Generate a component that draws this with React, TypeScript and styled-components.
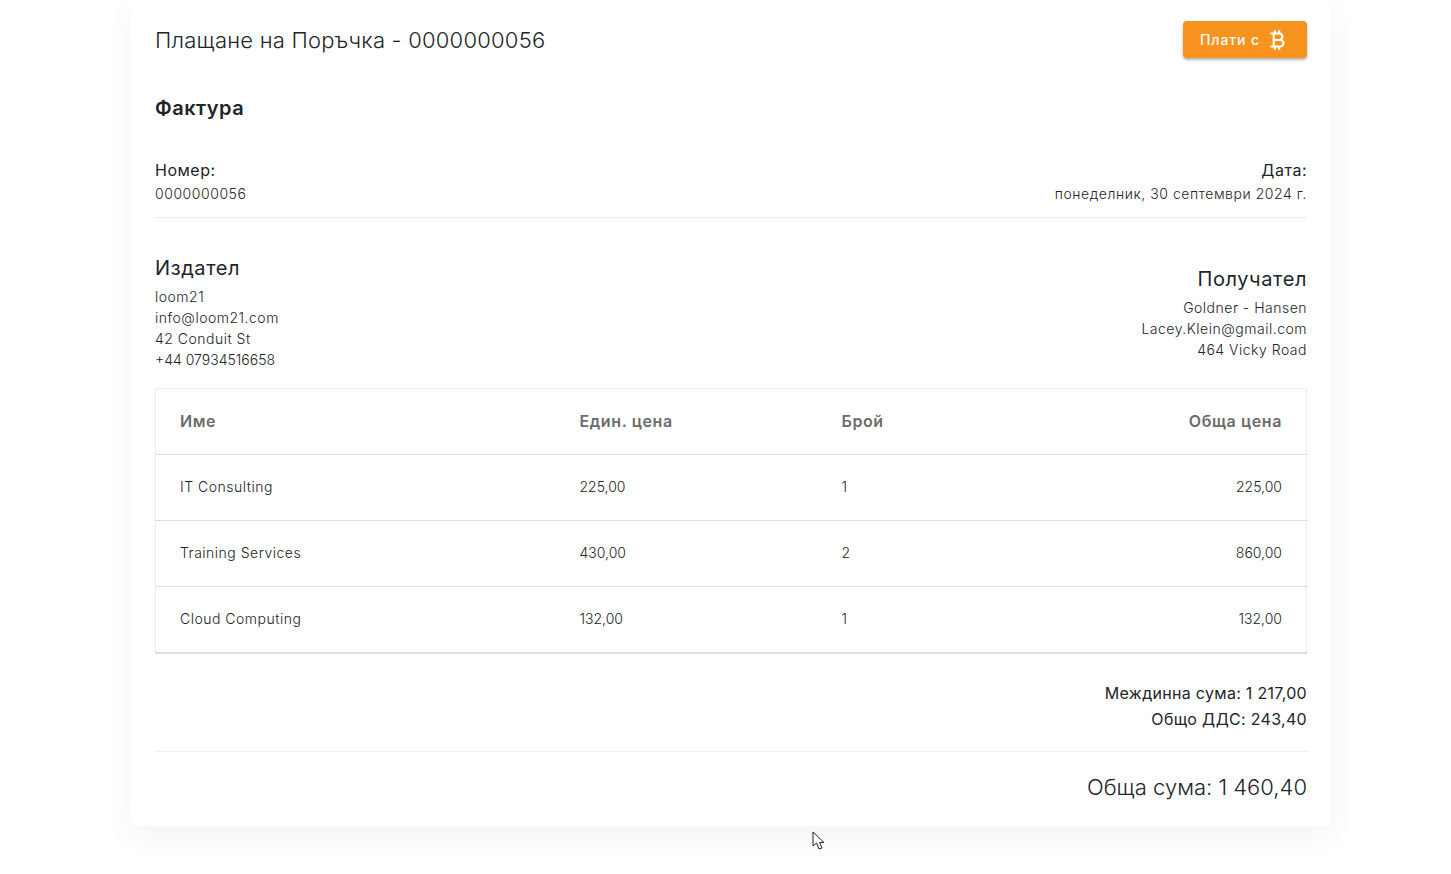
import React from 'react'
import styled, { createGlobalStyle } from 'styled-components'
import { MdCurrencyBitcoin } from 'react-icons/md'

const GlobalStyle = createGlobalStyle`
  html, body {
    margin: 0;
    background: #fff;
  }
  body {
    font-family: Inter, "Noto Sans", sans-serif;
    font-size: 14px;
    color: #212529;
    overflow: hidden;
  }
`

const Page = styled.div`
  height: 874px;
  padding-left: 131px;
  position: relative;
  box-sizing: border-box;
`

const Card = styled.main`
  width: 1200px;
  height: 826px;
  box-sizing: border-box;
  padding: 21px 24px 0;
  background: #fff;
  box-shadow: 0 10px 30px rgba(0, 0, 0, 0.05);
`

const Header = styled.header`
  display: flex;
  justify-content: space-between;
  align-items: flex-start;
  height: 37px;
`

const Title = styled.h1`
  margin: 0;
  font-size: 22px;
  font-weight: 300;
  letter-spacing: 0.22px;
  line-height: 38px;
  color: #212529;
`

const PayButton = styled.button`
  display: flex;
  align-items: center;
  justify-content: center;
  gap: 4px;
  width: 124px;
  height: 37px;
  padding: 0;
  border: 0;
  border-radius: 4px;
  background: #f7931e;
  color: #fff;
  font: 500 14px Inter, sans-serif;
  letter-spacing: 0.9px;
  box-shadow: 0 2px 3px rgba(0, 0, 0, 0.3);
`

const InvoiceHeading = styled.h2`
  margin: 36px 0 0;
  font-size: 20px;
  font-weight: 600;
  letter-spacing: 0.5px;
  line-height: 28px;
`

const Split = styled.section<{ $center?: boolean }>`
  display: flex;
  justify-content: space-between;
  align-items: ${p => (p.$center ? 'center' : 'flex-start')};
`

const MetaRow = styled(Split)`
  margin-top: 36px;
  padding-bottom: 11px;
  border-bottom: 1px solid #eeeeee;
`

const PartyRow = styled(Split)`
  margin-top: 37px;
`

const Block = styled.div<{ $right?: boolean }>`
  text-align: ${p => (p.$right ? 'right' : 'left')};
`

const MetaLabel = styled.div`
  font-size: 16px;
  font-weight: 400;
  letter-spacing: 0.5px;
  line-height: 24px;
`

const MetaValue = styled.div`
  font-weight: 300;
  letter-spacing: 0.55px;
  line-height: 24px;
`

const PartyName = styled.h3`
  margin: 0 0 5px;
  font-size: 20px;
  font-weight: 400;
  letter-spacing: 0.6px;
  line-height: 26px;
`

const PartyLine = styled.div<{ $digits?: boolean }>`
  font-weight: 300;
  letter-spacing: ${p => (p.$digits ? '0' : '0.5px')};
  line-height: 21px;
`

const TableBox = styled.table`
  width: 1152px;
  margin-top: 18px;
  border-collapse: collapse;
  table-layout: fixed;
  border: 1px solid #eeeeee;
  box-shadow: 0 1px 1px rgba(0, 0, 0, 0.12);
`

const HeadCell = styled.th<{ $w?: number; $right?: boolean }>`
  width: ${p => (p.$w ? `${p.$w}px` : 'auto')};
  height: 66px;
  padding: 0 24px 2px;
  box-sizing: border-box;
  text-align: ${p => (p.$right ? 'right' : 'left')};
  font-size: 16px;
  font-weight: 600;
  letter-spacing: 0.6px;
  color: #6c6c6c;
  border-bottom: 1px solid #dddddd;
`

const Cell = styled.td<{ $right?: boolean; $text?: boolean }>`
  height: 66px;
  padding: 0 24px 2px;
  box-sizing: border-box;
  text-align: ${p => (p.$right ? 'right' : 'left')};
  font-weight: 300;
  letter-spacing: ${p => (p.$text ? '0.5px' : '0')};
  border-bottom: 1px solid #dddddd;
`

const Totals = styled.section`
  margin-top: 27px;
  padding-bottom: 19px;
  border-bottom: 1px solid #eeeeee;
  text-align: right;
`

const SubTotal = styled.div`
  font-size: 16px;
  font-weight: 400;
  letter-spacing: 0.3px;
  line-height: 26px;
`

const GrandTotal = styled.div`
  margin-top: 19px;
  text-align: right;
  font-size: 22px;
  font-weight: 300;
  line-height: 33px;
`

const Cursor = styled.svg`
  position: absolute;
  left: 812px;
  top: 831px;
`

const rows = [
  { name: 'IT Consulting', price: '225,00', qty: 1, total: '225,00' },
  { name: 'Training Services', price: '430,00', qty: 2, total: '860,00' },
  { name: 'Cloud Computing', price: '132,00', qty: 1, total: '132,00' },
]

export default function App() {
  return (
    <Page>
      <GlobalStyle />
      <Card>
        <Header>
          <Title>Плащане на Поръчка - 0000000056</Title>
          <PayButton>
            Плати с <MdCurrencyBitcoin size={26} />
          </PayButton>
        </Header>

        <InvoiceHeading>Фактура</InvoiceHeading>

        <MetaRow>
          <Block>
            <MetaLabel>Номер:</MetaLabel>
            <MetaValue>0000000056</MetaValue>
          </Block>
          <Block $right>
            <MetaLabel>Дата:</MetaLabel>
            <MetaValue>понеделник, 30 септември 2024 г.</MetaValue>
          </Block>
        </MetaRow>

        <PartyRow $center>
          <Block>
            <PartyName>Издател</PartyName>
            <PartyLine>loom21</PartyLine>
            <PartyLine>info@loom21.com</PartyLine>
            <PartyLine>42 Conduit St</PartyLine>
            <PartyLine $digits>+44 07934516658</PartyLine>
          </Block>
          <Block $right>
            <PartyName>Получател</PartyName>
            <PartyLine>Goldner - Hansen</PartyLine>
            <PartyLine>Lacey.Klein@gmail.com</PartyLine>
            <PartyLine>464 Vicky Road</PartyLine>
          </Block>
        </PartyRow>

        <TableBox>
          <thead>
            <tr>
              <HeadCell $w={400}>Име</HeadCell>
              <HeadCell $w={262}>Един. цена</HeadCell>
              <HeadCell $w={200}>Брой</HeadCell>
              <HeadCell $right>Обща цена</HeadCell>
            </tr>
          </thead>
          <tbody>
            {rows.map(row => (
              <tr key={row.name}>
                <Cell $text>{row.name}</Cell>
                <Cell>{row.price}</Cell>
                <Cell>{row.qty}</Cell>
                <Cell $right>{row.total}</Cell>
              </tr>
            ))}
          </tbody>
        </TableBox>

        <Totals>
          <SubTotal>Междинна сума: 1 217,00</SubTotal>
          <SubTotal>Общо ДДС: 243,40</SubTotal>
        </Totals>
        <GrandTotal>Обща сума: 1 460,40</GrandTotal>
      </Card>
      <Cursor width="14" height="20" viewBox="0 0 14 20">
        <path
          d="M1 1 L1 15 L4.5 12 L7 18 L10 17 L7.5 11.5 L12 11.5 Z"
          fill="#fff"
          stroke="#222"
          strokeWidth="1"
        />
      </Cursor>
    </Page>
  )
}
